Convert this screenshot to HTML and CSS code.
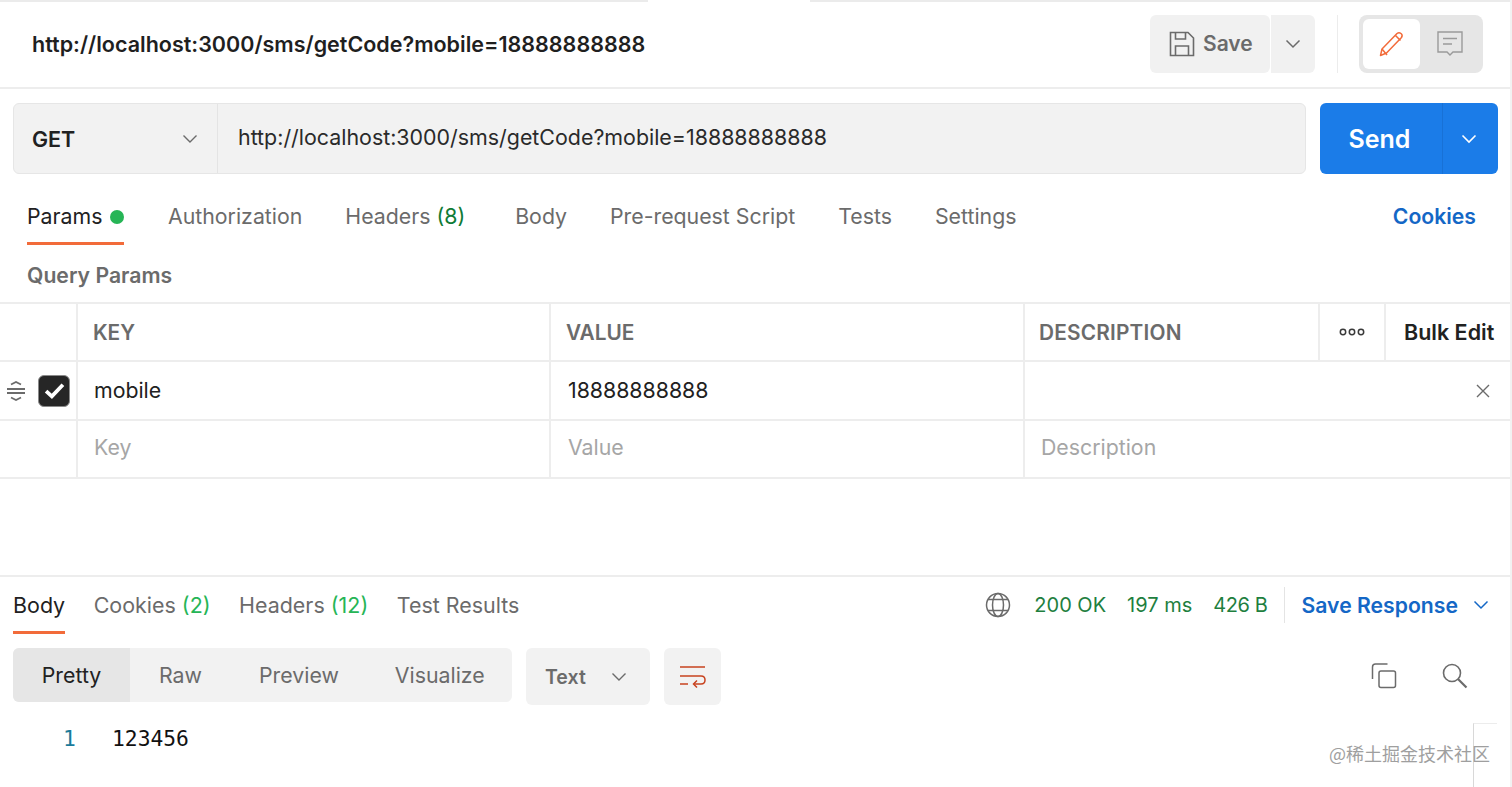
FILE: index.html
```html
<!DOCTYPE html>
<html lang="en">
<head>
<meta charset="utf-8">
<title>Postman request</title>
<link rel="stylesheet" href="styles.css">
</head>
<body>
<div class="app">
  <div class="topstrip"><span class="strip-gap"></span></div>
  <header class="titlebar">
    <h1 class="title">http://localhost:3000/sms/getCode?mobile=18888888888</h1>
    <div class="title-actions">
      <div class="save-group">
        <button class="save-btn">
          <svg class="ico-save" viewBox="0 0 26 26" fill="none" stroke="#6b6b6b" stroke-width="1.6"><path d="M1.500 1.500h17.500l5.500 5.500v17.500h-23z"/><path d="M6.500 1.500v6.500h10v-6.500"/><path d="M6.500 24.500v-9.500h13v9.500"/></svg>
          <span>Save</span>
        </button>
        <button class="save-caret"><svg class="chev" viewBox="0 0 16 10" fill="none" stroke="#6b6b6b" stroke-width="1.500"><path d="M1.500 1.500l6.500 6.500 6.500-6.500"/></svg></button>
      </div>
      <span class="vrule"></span>
      <div class="mode-toggle">
        <span class="mode-on"><svg class="ico-pen" viewBox="0 0 26 26" fill="none" stroke="#f26b3a" stroke-width="1.500" stroke-linejoin="round"><path d="M1.500 24.500l1.500-6.500 15-15.500q2-1.500 4 0t.500 4l-15 15.500z"/><path d="M16.500 4.500l5 5M3 18l5 6"/></svg></span>
        <span class="mode-off"><svg class="ico-note" viewBox="0 0 26 26" fill="none" stroke="#9a9a9a" stroke-width="1.400"><path d="M1 1h24v20h-9l-3 3-3-3h-9z"/><path d="M6 7.500h14M6 13h9"/></svg></span>
      </div>
    </div>
  </header>

  <section class="request">
    <div class="urlbox">
      <div class="method"><span>GET</span><svg class="chev" viewBox="0 0 16 10" fill="none" stroke="#6b6b6b" stroke-width="1.400"><path d="M1.500 1.500l6.500 6.500 6.500-6.500"/></svg></div>
      <div class="url">http://localhost:3000/sms/getCode?mobile=18888888888</div>
    </div>
    <div class="send">
      <span class="send-label">Send</span>
      <span class="send-caret"><svg class="chev" viewBox="0 0 16 10" fill="none" stroke="#fff" stroke-width="1.600"><path d="M1.500 1.500l6.500 6.500 6.500-6.500"/></svg></span>
    </div>
  </section>

  <nav class="req-tabs">
    <a class="tab active">Params <i class="dot"></i></a>
    <a class="tab">Authorization</a>
    <a class="tab tab-headers">Headers <em class="count-dark">(8)</em></a>
    <a class="tab">Body</a>
    <a class="tab">Pre-request Script</a>
    <a class="tab">Tests</a>
    <a class="tab">Settings</a>
    <a class="cookies">Cookies</a>
  </nav>

  <div class="query-title">Query Params</div>

  <div class="table">
    <div class="row row-head">
      <div class="c c-grip"></div>
      <div class="c c-key">KEY</div>
      <div class="c c-val">VALUE</div>
      <div class="c c-desc">DESCRIPTION</div>
      <div class="c c-more"><svg class="ico-more" viewBox="0 0 26 8" fill="none" stroke="#3a3a3a" stroke-width="1.500"><circle cx="4" cy="4" r="2.700"/><circle cx="13" cy="4" r="2.700"/><circle cx="22" cy="4" r="2.700"/></svg></div>
      <div class="c c-bulk">Bulk Edit</div>
    </div>
    <div class="row row-data">
      <div class="c c-grip">
        <svg class="ico-grip" viewBox="0 0 20 20" fill="none" stroke="#6b6b6b" stroke-width="1.800"><path d="M5 3.500l5-2.500 5 2.500M1 8h18M1 12h18M5 16.500l5 2.500 5-2.500"/></svg>
        <span class="check"><svg viewBox="0 0 20 16" fill="none" stroke="#fff" stroke-width="3.600"><path d="M2 8.500l5.500 5L18 2.500"/></svg></span>
      </div>
      <div class="c c-key">mobile</div>
      <div class="c c-val">18888888888</div>
      <div class="c c-rest"><svg class="ico-x" viewBox="0 0 14 14" fill="none" stroke="#6b6b6b" stroke-width="1.400"><path d="M1 1l12 12M13 1L1 13"/></svg></div>
    </div>
    <div class="row row-empty">
      <div class="c c-grip"></div>
      <div class="c c-key">Key</div>
      <div class="c c-val">Value</div>
      <div class="c c-rest">Description</div>
    </div>
  </div>

  <section class="response">
    <div class="res-tabs">
      <a class="rtab active">Body</a>
      <a class="rtab">Cookies <em class="count">(2)</em></a>
      <a class="rtab">Headers <em class="count">(12)</em></a>
      <a class="rtab">Test Results</a>
      <div class="res-meta">
        <svg class="ico-globe" viewBox="0 0 26 26" fill="none" stroke="#6b6b6b" stroke-width="1.500"><circle cx="13" cy="13" r="11.500"/><ellipse cx="13" cy="13" rx="5.500" ry="11.500"/><path d="M3 7.500h20M3 18.500h20"/></svg>
        <span class="status status-ok">200 OK</span>
        <span class="status status-ms">197 ms</span>
        <span class="status status-size">426 B</span>
        <span class="meta-rule"></span>
        <a class="save-res">Save Response</a>
        <svg class="chev chev-blue" viewBox="0 0 16 10" fill="none" stroke="#1467c6" stroke-width="1.500"><path d="M1.500 1.500l6.500 6.500 6.500-6.500"/></svg>
      </div>
    </div>
    <div class="res-tools">
      <div class="views">
        <span class="view view-on">Pretty</span>
        <span class="view view-raw">Raw</span>
        <span class="view view-prev">Preview</span>
        <span class="view view-vis">Visualize</span>
      </div>
      <div class="format"><span>Text</span><svg class="chev" viewBox="0 0 16 10" fill="none" stroke="#6b6b6b" stroke-width="1.400"><path d="M1.500 1.500l6.500 6.500 6.500-6.500"/></svg></div>
      <div class="wrap"><svg class="ico-wrap" viewBox="0 0 26 24" fill="none" stroke="#c8431f" stroke-width="1.500"><path d="M0 2h25M0 11h21q4 0 4 4t-4 4h-7"/><path d="M17 15.500l-3.500 3.500 3.500 3.500M0 19h8"/></svg></div>
      <div class="res-icons">
        <svg class="ico-copy" viewBox="0 0 26 26" fill="none" stroke="#6b6b6b" stroke-width="1.500"><path d="M1.500 16v-12q0-3 3-3h12"/><rect x="8" y="8" width="16.500" height="16.500" rx="2"/></svg>
        <svg class="ico-search" viewBox="0 0 26 26" fill="none" stroke="#6b6b6b" stroke-width="1.600"><circle cx="10" cy="10" r="8.500"/><path d="M16 16l8.500 8.500" stroke-width="2.200"/></svg>
      </div>
    </div>
    <div class="code"><span class="ln">1</span><span class="val">123456</span></div>
  </section>

  <span class="scroll-mark"></span>
  <span class="watermark">@稀土掘金技术社区</span>
</div>
</body>
</html>
```

FILE: styles.css
```css
* { box-sizing: border-box; }
html, body { margin: 0; padding: 0; background: #fff; }
body { font-family: Inter, "Noto Sans CJK SC", sans-serif; color: #212121; }
.app { position: relative; width: 1512px; height: 787px; overflow: hidden; border-right: 2px solid #f2f2f2; }
button { font: inherit; border: 0; padding: 0; }
em { font-style: normal; }
.chev { width: 16px; height: 10px; display: block; flex: none; }

.topstrip { height: 2px; background: #ebebeb; padding-left: 648px; }
.strip-gap { display: block; width: 162px; height: 2px; background: #fff; }
.titlebar { height: 87px; border-bottom: 2px solid #ededed; display: flex; align-items: center; justify-content: space-between; padding: 0 27px 1px 32px; }
.title { margin: 0; font-size: 21.500px; font-weight: 600; color: #1f1f1f; letter-spacing: 0; }
.title-actions { display: flex; align-items: center; margin-top: -1px; }
.save-group { display: flex; gap: 1px; height: 58px; }
.save-btn { width: 120px; background: #f1f1f1; border-radius: 6px; display: flex; align-items: center; gap: 8px; padding-left: 19px; font-size: 21px; font-weight: 600; color: #6b6b6b; }
.ico-save { width: 26px; height: 26px; }
.save-caret { width: 44px; background: #f1f1f1; border-radius: 0 6px 6px 0; display: flex; align-items: center; justify-content: center; }
.vrule { width: 1px; height: 58px; background: #ececec; margin: 0 21px 0 22px; }
.mode-toggle { width: 124px; height: 58px; background: #e6e6e6; border-radius: 8px; padding: 4px; display: flex; }
.mode-on { width: 57px; height: 50px; background: #fff; border-radius: 6px; display: flex; align-items: center; justify-content: center; }
.mode-off { flex: 1; display: flex; align-items: center; justify-content: center; }
.ico-pen, .ico-note { width: 26px; height: 26px; }

.request { display: flex; gap: 14px; padding: 14px 12px 0 13px; height: 85px; }
.urlbox { width: 1293px; height: 71px; background: #f2f2f2; border: 1px solid #e6e6e6; border-radius: 6px; display: flex; align-items: center; }
.method { width: 204px; height: 100%; border-right: 1px solid #e4e4e4; display: flex; align-items: center; justify-content: space-between; padding: 0 19px 0 18px; font-size: 21.500px; font-weight: 600; }
.url { padding-left: 20px; font-size: 21.400px; color: #2a2a2a; margin-top: -3px; }
.send { width: 178px; height: 71px; background: #1b7ce8; border-radius: 6px; display: flex; color: #fff; }
.send-label { width: 122px; display: flex; align-items: center; justify-content: center; font-size: 25px; font-weight: 600; padding-right: 3px; }
.send-caret { flex: 1; border-left: 1px solid #1871d6; display: flex; align-items: center; justify-content: center; padding-right: 3px; }

.req-tabs { height: 71px; padding: 0 34px 0 27px; display: flex; align-items: flex-start; font-size: 21.300px; color: #6b6b6b; gap: 43px; }
.tab { height: 71px; padding-top: 29px; white-space: nowrap; }
.tab.active { color: #212121; border-bottom: 3px solid #f26b3a; width: 97px; margin-right: 1px; }
.dot { display: inline-block; width: 14px; height: 14px; border-radius: 50%; background: #26b556; margin-left: 2px; }
.tab-headers { margin-right: 7px; }
.count-dark { color: #0f7b36; }
.cookies { margin-left: auto; padding-top: 29px; color: #1467c6; font-weight: 600; font-size: 21.200px; }

.query-title { height: 57px; padding: 17px 0 0 27px; font-size: 21.200px; font-weight: 600; color: #6b6b6b; }

.table { border-top: 2px solid #ededed; height: 176px; }
.row { display: flex; height: 59px; border-bottom: 2px solid #ededed; align-items: stretch; font-size: 21.300px; }
.row-head { height: 58px; font-size: 20.800px; font-weight: 600; color: #6b6b6b; }
.row-data .c-key, .row-data .c-val { padding-bottom: 2px; }
.row-empty { height: 58px; color: #a6a6a6; }
.row-empty .c { padding-bottom: 5px; }
.c { display: flex; align-items: center; border-right: 2px solid #ededed; }
.c-grip { width: 78px; padding-left: 6px; gap: 12px; }
.c-key { width: 473px; padding-left: 15px; }
.c-val { width: 474px; padding-left: 15px; }
.c-desc { width: 295px; padding-left: 14px; letter-spacing: .2px; }
.c-more { width: 66px; justify-content: center; }
.c-bulk { flex: 1; border-right: 0; padding-left: 18px; color: #212121; font-size: 21.500px; }
.c-rest { flex: 1; border-right: 0; padding: 0 20px 0 16px; justify-content: flex-end; }
.row-empty .c-rest { justify-content: flex-start; }
.row-data .c-key, .row-data .c-val { color: #212121; }
.row-data .c-key { padding-left: 16px; }
.row-data .c-val { padding-left: 17px; }
.row-empty .c-key { padding-left: 16px; }
.row-empty .c-val { padding-left: 17px; }
.ico-more { width: 26px; height: 8px; }
.ico-grip { width: 20px; height: 20px; }
.check { width: 32px; height: 32px; background: #262626; border: 1px solid #8a8a8a; border-radius: 6px; display: flex; align-items: center; justify-content: center; }
.check svg { width: 21px; height: 17px; }
.ico-x { width: 14px; height: 14px; }

.response { margin-top: 97px; border-top: 2px solid #ededed; }
.res-tabs { display: flex; height: 58px; padding: 0 0 0 13px; font-size: 21.450px; color: #6b6b6b; gap: 28.500px; }
.rtab { height: 57px; padding-top: 15px; white-space: nowrap; }
.rtab.active { color: #212121; border-bottom: 3px solid #f26b3a; }
.count { color: #26b556; }
.res-meta { margin-left: auto; display: flex; align-items: center; height: 56px; font-size: 20px; padding-right: 21px; }
.ico-globe { width: 26px; height: 26px; margin-right: 23px; }
.status { color: #1f7f3f; white-space: nowrap; }
.status-ok { margin-right: 21px; }
.status-ms { margin-right: 21px; }
.status-size { letter-spacing: -.4px; }
.meta-rule { width: 1px; height: 36px; background: #e4e4e4; margin: 0 17px 0 16px; }
.save-res { color: #1467c6; font-weight: 600; font-size: 21.200px; margin-right: 15px; white-space: nowrap; }

.res-tools { display: flex; padding: 13px 0 0 13px; align-items: flex-start; }
.views { width: 499px; height: 54px; background: #f2f2f2; border-radius: 6px; display: flex; align-items: center; font-size: 21.300px; color: #6b6b6b; }
.view { display: flex; align-items: center; height: 100%; white-space: nowrap; }
.view-on { width: 117px; justify-content: center; background: #e6e6e6; color: #212121; border-radius: 6px 0 0 6px; }
.view-raw { margin-left: 29px; }
.view-prev { margin-left: 57px; }
.view-vis { margin-left: 56px; }
.format { width: 124px; height: 57px; margin-left: 14px; background: #f2f2f2; border-radius: 6px; display: flex; align-items: center; justify-content: space-between; padding: 0 23px 0 19px; font-size: 19.500px; font-weight: 600; color: #6b6b6b; }
.wrap { width: 57px; height: 57px; margin-left: 14px; background: #f2f2f2; border-radius: 6px; display: flex; align-items: center; justify-content: center; }
.ico-wrap { width: 26px; height: 24px; }
.res-icons { margin-left: auto; display: flex; gap: 45px; padding: 15px 42px 0 0; }
.ico-copy, .ico-search { width: 26px; height: 26px; }

.code { display: flex; padding-top: 20px; font-family: "DejaVu Sans Mono", monospace; font-size: 21.300px; line-height: 28px; }
.ln { width: 112px; padding-left: 63px; color: #1a7a9a; }
.val { color: #111; }

.scroll-mark { position: absolute; left: 1473px; top: 723px; width: 24px; height: 64px; border-top: 1px solid #ececec; border-left: 1px solid #d8d8d8; }
.watermark { position: absolute; left: 1329px; top: 741px; font-family: "Noto Sans CJK SC", sans-serif; font-size: 18px; line-height: 24px; color: #8f8f8f; opacity: .85; white-space: nowrap; }
```
